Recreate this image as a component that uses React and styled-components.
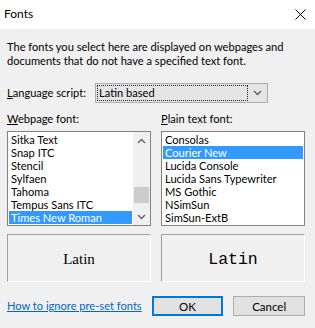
import React from 'react';
import styled, { createGlobalStyle } from 'styled-components';

const Global = createGlobalStyle`
  html, body { margin: 0; padding: 0; background: #f0f0f0; }
  body { font-family: "Lato", "Segoe UI", sans-serif; font-size: 11.1px; color: #000; }
  * { box-sizing: border-box; }
`;

const Window = styled.div`
  width: 315px;
  height: 328px;
  background: #f0f0f0;
  display: flex;
  flex-direction: column;
  overflow: hidden;
`;

const TitleBar = styled.div`
  height: 29px;
  background: #fff;
  display: flex;
  align-items: center;
  justify-content: space-between;
  padding: 0 9px 1px 4px;
`;

const Title = styled.span`
  font-size: 12px;
  line-height: 16px;
`;

const Body = styled.div`
  display: flex;
  flex-direction: column;
  padding: 11px 10px 0 7px;
`;

const Description = styled.p`
  margin: 0;
  line-height: 14px;
  white-space: nowrap;
`;

const LangRow = styled.div`
  margin-top: 15px;
  height: 20px;
  display: flex;
  align-items: center;
`;

const Label = styled.span`
  display: block;
  line-height: 14px;
  white-space: nowrap;
  width: ${p => p.$width || 'auto'};
  flex: none;
`;

const Key = styled.span`
  text-decoration: underline;
`;

const Combo = styled.div`
  width: 173px;
  height: 20px;
  border: 1px solid #adadad;
  background: #e5e5e5;
  display: flex;
  align-items: stretch;
  padding: 1px;
`;

const ComboValue = styled.div`
  flex: 1;
  border: 1px dotted #222;
  padding-left: 1px;
  line-height: 14px;
  display: flex;
  align-items: center;
`;

const ComboArrow = styled.div`
  width: 18px;
  display: flex;
  align-items: center;
  justify-content: center;
`;

const TwoCols = styled.div`
  display: grid;
  grid-template-columns: 144px 144px;
  column-gap: 10px;
  margin-top: ${p => p.$top}px;
`;

const Column = styled.div`
  display: flex;
  flex-direction: column;
  gap: 5px;
`;

const ListBox = styled.div`
  height: 95px;
  border: 1px solid #828282;
  background: #fff;
  display: flex;
`;

const List = styled.ul`
  list-style: none;
  margin: 0;
  padding: 1px;
  flex: 1;
  min-width: 0;
`;

const Item = styled.li`
  height: 13px;
  line-height: 13px;
  padding-left: 2px;
  white-space: nowrap;
  background: ${p => (p.$selected ? '#3399ff' : 'transparent')};
  color: ${p => (p.$selected ? '#fff' : '#000')};
`;

const ScrollBar = styled.div`
  width: 17px;
  background: #f0f0f0;
  display: flex;
  flex-direction: column;
`;

const ScrollButton = styled.div`
  height: 17px;
  display: flex;
  align-items: center;
  justify-content: center;
`;

const Track = styled.div`
  flex: 1;
  padding-top: 38px;
`;

const Thumb = styled.div`
  height: 16px;
  margin: 0 1px;
  background: #cdcdcd;
`;

const Preview = styled.div`
  height: 48px;
  border-top: 1px solid #a0a0a0;
  border-left: 1px solid #a0a0a0;
  border-right: 1px solid #fff;
  border-bottom: 1px solid #fff;
  display: flex;
  align-items: center;
  justify-content: center;
  padding-top: 3px;
  font-family: ${p => (p.$mono ? '"Liberation Mono", monospace' : '"Liberation Serif", serif')};
  font-size: ${p => (p.$mono ? '16.5px' : '15px')};
`;

const Footer = styled.div`
  margin-top: 14px;
  height: 20px;
  display: flex;
  align-items: center;
  gap: 10px;
`;

const Link = styled.a`
  flex: 1;
  color: #0066cc;
  text-decoration: underline;
  line-height: 14px;
  white-space: nowrap;
  cursor: pointer;
`;

const Button = styled.button`
  width: 73px;
  height: 20px;
  margin: 0;
  padding: 0;
  font-family: inherit;
  font-size: 11.5px;
  color: #000;
  background: #e1e1e1;
  border: ${p => (p.$default ? '2px solid #0078d7' : '1px solid #adadad')};
`;

const Chevron = ({ up }) => (
  <svg width="9" height="6" viewBox="0 0 9 6">
    <path
      d={up ? 'M1 5 L4.5 1.5 L8 5' : 'M1 1 L4.5 4.5 L8 1'}
      fill="none"
      stroke="#606060"
      strokeWidth="1.4"
    />
  </svg>
);

const CloseIcon = () => (
  <svg width="11" height="11" viewBox="0 0 11 11">
    <path d="M0.5 0.5 L10.5 10.5 M10.5 0.5 L0.5 10.5" stroke="#000" strokeWidth="1" />
  </svg>
);

const webFonts = ['Sitka Text', 'Snap ITC', 'Stencil', 'Sylfaen', 'Tahoma', 'Tempus Sans ITC', 'Times New Roman'];
const plainFonts = ['Consolas', 'Courier New', 'Lucida Console', 'Lucida Sans Typewriter', 'MS Gothic', 'NSimSun', 'SimSun-ExtB'];

export default function App() {
  return (
    <>
      <Global />
      <Window>
        <TitleBar>
          <Title>Fonts</Title>
          <CloseIcon />
        </TitleBar>
        <Body>
          <Description>
            The fonts you select here are displayed on webpages and
            <br />
            documents that do not have a specified text font.
          </Description>
          <LangRow>
            <Label $width="88px"><Key>L</Key>anguage script:</Label>
            <Combo>
              <ComboValue>Latin based</ComboValue>
              <ComboArrow><Chevron /></ComboArrow>
            </Combo>
          </LangRow>
          <TwoCols $top={9}>
            <Column>
              <Label><Key>W</Key>ebpage font:</Label>
              <ListBox>
                <List>
                  {webFonts.map(f => (
                    <Item key={f} $selected={f === 'Times New Roman'}>{f}</Item>
                  ))}
                </List>
                <ScrollBar>
                  <ScrollButton><Chevron up /></ScrollButton>
                  <Track><Thumb /></Track>
                  <ScrollButton><Chevron /></ScrollButton>
                </ScrollBar>
              </ListBox>
            </Column>
            <Column>
              <Label><Key>P</Key>lain text font:</Label>
              <ListBox>
                <List>
                  {plainFonts.map(f => (
                    <Item key={f} $selected={f === 'Courier New'}>{f}</Item>
                  ))}
                </List>
              </ListBox>
            </Column>
          </TwoCols>
          <TwoCols $top={8}>
            <Preview>Latin</Preview>
            <Preview $mono>Latin</Preview>
          </TwoCols>
          <Footer>
            <Link>How to ignore pre-set fonts</Link>
            <Button $default>OK</Button>
            <Button>Cancel</Button>
          </Footer>
        </Body>
      </Window>
    </>
  );
}
